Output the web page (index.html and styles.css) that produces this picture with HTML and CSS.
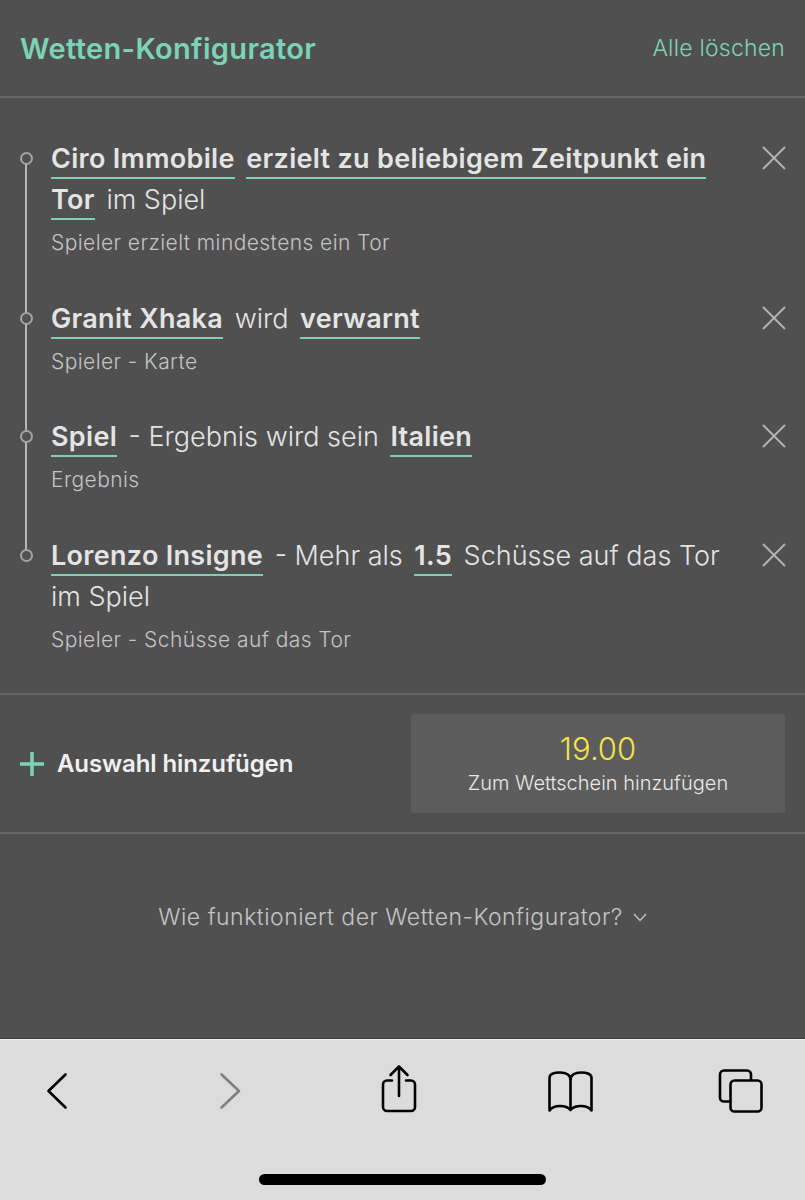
FILE: index.html
```html
<!DOCTYPE html>
<html lang="de">
<head>
    <meta charset="UTF-8">
    <meta name="viewport" content="width=device-width, initial-scale=1.0">
    <title>Wetten-Konfigurator</title>
    <link rel="stylesheet" href="styles.css">
</head>
<body>
    <main class="page">
        <header class="top">
            <h1 class="title">Wetten-Konfigurator</h1>
            <a class="clear-all">Alle löschen</a>
        </header>

        <ul class="legs">
            <li class="leg">
                <div class="leg-body">
                    <p class="leg-text"><span class="pick">Ciro Immobile</span> <span class="pick">erzielt zu beliebigem Zeitpunkt ein</span> <span class="pick">Tor</span> <span class="plain">im Spiel</span></p>
                    <p class="leg-type">Spieler erzielt mindestens ein Tor</p>
                </div>
                <svg class="remove" viewBox="0 0 24 24"><path d="M1 1 L23 23 M23 1 L1 23"/></svg>
            </li>
            <li class="leg">
                <div class="leg-body">
                    <p class="leg-text"><span class="pick">Granit Xhaka</span> <span class="plain">wird</span> <span class="pick">verwarnt</span></p>
                    <p class="leg-type">Spieler - Karte</p>
                </div>
                <svg class="remove" viewBox="0 0 24 24"><path d="M1 1 L23 23 M23 1 L1 23"/></svg>
            </li>
            <li class="leg">
                <div class="leg-body">
                    <p class="leg-text"><span class="pick">Spiel</span> <span class="plain">- Ergebnis wird sein</span> <span class="pick">Italien</span></p>
                    <p class="leg-type">Ergebnis</p>
                </div>
                <svg class="remove" viewBox="0 0 24 24"><path d="M1 1 L23 23 M23 1 L1 23"/></svg>
            </li>
            <li class="leg">
                <div class="leg-body">
                    <p class="leg-text"><span class="pick">Lorenzo Insigne</span> <span class="plain">- Mehr als</span> <span class="pick">1.5</span> <span class="plain">Schüsse auf das Tor</span> <span class="plain">im Spiel</span></p>
                    <p class="leg-type">Spieler - Schüsse auf das Tor</p>
                </div>
                <svg class="remove" viewBox="0 0 24 24"><path d="M1 1 L23 23 M23 1 L1 23"/></svg>
            </li>
        </ul>

        <section class="actions">
            <a class="add-leg">
                <svg class="plus" viewBox="0 0 24 24"><path d="M12 0 V24 M0 12 H24"/></svg>
                Auswahl hinzufügen
            </a>
            <button class="add-slip">
                <span class="odds">19.00</span>
                <span class="add-slip-label">Zum Wettschein hinzufügen</span>
            </button>
        </section>

        <a class="help">
            Wie funktioniert der Wetten-Konfigurator?
            <svg class="help-arrow" viewBox="0 0 14 9"><path d="M1 1 L7 7.5 L13 1"/></svg>
        </a>
    </main>

    <!-- Browser toolbar -->
    <nav class="toolbar">
        <div class="tools">
            <svg class="tool" viewBox="0 0 60 60"><path d="M38.5 14.5 L21.5 31 L38.5 47.5"/></svg>
            <svg class="tool tool-off" viewBox="0 0 60 60"><path d="M23.5 14.5 L41 31 L23.5 47.5"/></svg>
            <svg class="tool" viewBox="0 0 60 60"><path d="M23 20.5 H18 a4 4 0 0 0 -4 4 V47 a4 4 0 0 0 4 4 H42 a4 4 0 0 0 4 -4 V24.5 a4 4 0 0 0 -4 -4 H37 M30 36 V6.5 M21.5 15 L30 6.5 L38.5 15"/></svg>
            <svg class="tool" viewBox="0 0 60 60"><path d="M30.5 50 V20 C30.5 15 26 12.5 20 12.5 C14 12.5 9.5 14 9.5 18 V50.5 C12 47 16 46 20 46 C25 46 28.5 47.5 30.5 50 C32.5 47.5 36 46 41 46 C45 46 49 47 51.5 50.5 V18 C51.5 14 47 12.5 41 12.5 C35 12.5 30.5 15 30.5 20"/></svg>
            <svg class="tool" viewBox="0 0 60 60"><path d="M19 41.5 H13 a4 4 0 0 1 -4 -4 V14.5 a4 4 0 0 1 4 -4 H36 a4 4 0 0 1 4 4 V20"/><rect x="19.5" y="20.5" width="31" height="31" rx="4"/></svg>
        </div>
        <div class="home-bar"></div>
    </nav>
</body>
</html>
```

FILE: styles.css
```css
* {
    box-sizing: border-box;
}
body {
    margin: 0;
    height: 1200px;
    overflow: hidden;
    background-color: #505050;
    font-family: Inter, "Liberation Sans", sans-serif;
    color: #e4e4e4;
}
p, h1, ul {
    margin: 0;
    padding: 0;
}
.page {
    height: 1039px;
    border-bottom: 1px solid #3e3e3e;
}

/* header */
.top {
    display: flex;
    justify-content: space-between;
    align-items: center;
    height: 98px;
    padding: 0 20px;
    border-bottom: 2px solid #666;
}
.title {
    font-size: 29px;
    font-weight: 600;
    letter-spacing: 0.35px;
    color: #7dd3b5;
}
.clear-all {
    font-size: 23px;
    font-weight: 300;
    letter-spacing: 0.2px;
    color: #7dd3b5;
}

/* selected legs with the timeline on the left */
.legs {
    list-style: none;
    padding: 40px 20px 0 51px;
    height: 595px;
}
.leg {
    position: relative;
    display: flex;
    justify-content: space-between;
    align-items: flex-start;
    margin-bottom: 40.5px;
}
.leg::before {
    content: "";
    position: absolute;
    left: -31px;
    top: 14px;
    width: 9px;
    height: 9px;
    border: 2px solid #a4a4a4;
    border-radius: 50%;
    background-color: #505050;
    z-index: 1;
}
.leg::after {
    content: "";
    position: absolute;
    left: -26px;
    top: 20px;
    bottom: -62px;
    width: 2px;
    background-color: #b5b5b5;
}
.leg:last-child::after {
    display: none;
}
.leg-body {
    width: 680px;
}
.leg-text {
    font-size: 27px;
    line-height: 41px;
    word-spacing: 4px;
}
.pick {
    display: inline-block;
    padding-bottom: 2px;
    font-weight: 600;
    letter-spacing: 0.3px;
    line-height: 32px;
    word-spacing: 0;
    border-bottom: 2px solid #7fcfb3;
}
.plain {
    font-weight: 300;
    word-spacing: 0;
}
.leg-type {
    margin-top: 9px;
    font-size: 21px;
    font-weight: 300;
    letter-spacing: 0.42px;
    line-height: 28px;
    color: #c4c4c4;
}
.remove {
    width: 24px;
    height: 24px;
    margin: 8px -1px 0 0;
    fill: none;
    stroke: #b5b5b5;
    stroke-width: 1.8;
}

/* add selection row */
.actions {
    display: flex;
    justify-content: space-between;
    align-items: center;
    height: 141px;
    padding: 0 20px;
    border-top: 2px solid #666;
    border-bottom: 2px solid #666;
}
.add-leg {
    display: flex;
    align-items: center;
    font-size: 24px;
    font-weight: 600;
    letter-spacing: -0.1px;
    color: #f0f0f0;
}
.plus {
    width: 24px;
    height: 24px;
    margin-right: 13px;
    fill: none;
    stroke: #7dd3b5;
    stroke-width: 3.5;
}
.add-slip {
    display: flex;
    flex-direction: column;
    align-items: center;
    justify-content: center;
    width: 374px;
    height: 99px;
    border: 0;
    border-radius: 3px;
    background-color: #5d5d5d;
    font-family: inherit;
}
.odds {
    font-size: 31px;
    font-weight: 300;
    line-height: 38px;
    color: #f2e348;
}
.add-slip-label {
    padding-top: 1px;
    font-size: 20px;
    font-weight: 300;
    line-height: 28px;
    color: #e8e8e8;
}

.help {
    display: flex;
    justify-content: center;
    align-items: center;
    margin-top: 68px;
    font-size: 23px;
    font-weight: 300;
    letter-spacing: 0.5px;
    line-height: 30px;
    color: #c4c4c4;
}
.help-arrow {
    width: 14px;
    height: 9px;
    margin-left: 10px;
    fill: none;
    stroke: #bdbdbd;
    stroke-width: 1.5;
}

/* browser toolbar */
.toolbar {
    height: 161px;
    padding-top: 20px;
    background-color: #dcdcdc;
    border-top: 1px solid #eee;
}
.tools {
    display: flex;
    gap: 111px;
    padding-left: 27px;
}
.tool {
    width: 60px;
    height: 60px;
    fill: none;
    stroke: #000;
    stroke-width: 2.6;
    stroke-linecap: round;
    stroke-linejoin: round;
}
.tool-off {
    stroke: #808080;
}
.home-bar {
    width: 287px;
    height: 11px;
    margin: 54px 0 0 259px;
    border-radius: 6px;
    background-color: #000;
}
```
